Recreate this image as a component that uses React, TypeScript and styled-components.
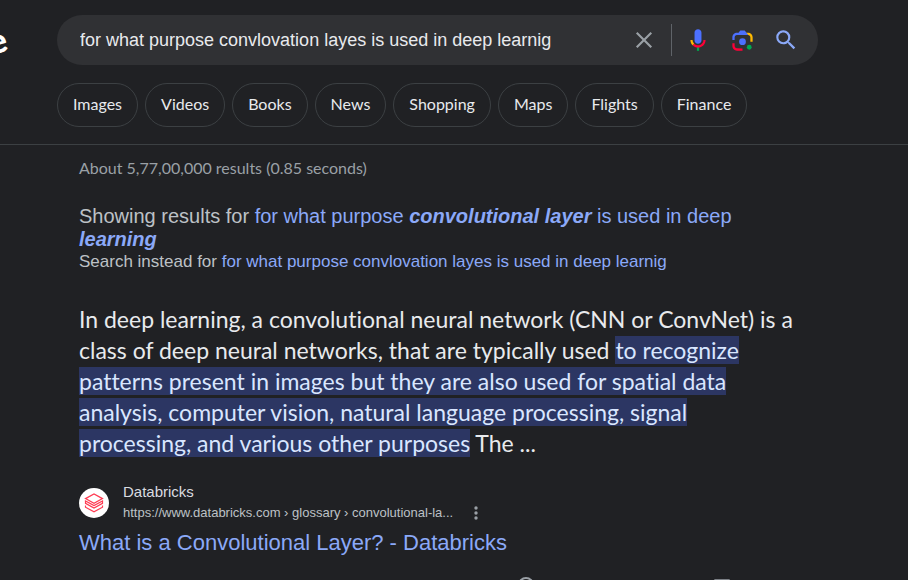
import React, { useState } from "react";
import styled, { createGlobalStyle } from "styled-components";

const sans = `"Liberation Sans", Arial, sans-serif`;
const display = `Lato, "Open Sans", sans-serif`;

const GlobalStyle = createGlobalStyle`
  *, *::before, *::after { box-sizing: border-box; }
  html, body { margin: 0; background: #202124; }
  body { font-family: ${sans}; color: #bdc1c6; overflow: hidden; }
  a { color: inherit; text-decoration: none; }
`;

const Page = styled.div`
  height: 100vh;
  overflow: hidden;
`;

const Header = styled.header`
  display: grid;
  grid-template-columns: 57px minmax(0, 761px);
  row-gap: 18px;
  padding: 15px 24px 17px 0;
  border-bottom: 1px solid #3c4043;
`;

const Logo = styled.a`
  display: flex;
  align-items: center;
  justify-content: flex-end;
  height: 50px;
  padding-right: 51px;
  overflow: hidden;
  color: #fff;
  font: 900 34px/50px ${display};
`;

const TiltedLetter = styled.span`
  display: inline-block;
  transform: rotate(-15deg);
`;

const SearchForm = styled.form`
  display: flex;
  align-items: center;
  height: 50px;
  padding: 0 10px 0 23px;
  border-radius: 25px;
  background: #303134;
`;

const SearchInput = styled.input`
  flex: 1;
  min-width: 0;
  padding: 0;
  border: 0;
  outline: 0;
  background: transparent;
  color: #e8eaed;
  font: 18px/24px ${sans};
`;

const IconButton = styled.button<{ $width?: number }>`
  display: flex;
  align-items: center;
  justify-content: center;
  flex: none;
  width: ${(p) => p.$width ?? 44}px;
  height: 44px;
  padding: 0;
  border: 0;
  background: transparent;
  cursor: pointer;
`;

const Divider = styled.span`
  width: 1px;
  height: 32px;
  margin: 0 4px 0 5px;
  background: #5f6368;
`;

const Filters = styled.nav`
  grid-column: 2;
  display: flex;
  gap: 7px;
`;

const Chip = styled.a`
  display: flex;
  align-items: center;
  height: 44px;
  padding: 0 15px 2px;
  border: 1px solid #3c4043;
  border-radius: 22px;
  color: #e8eaed;
  font: 16px/24px ${display};
`;

const Main = styled.main`
  max-width: 823px;
  padding: 11px 24px 0 79px;
`;

const Stats = styled.p`
  margin: 0;
  color: #9aa0a6;
  font: 16px/24px ${display};
`;

const Spelling = styled.section`
  max-width: 660px;
  margin-top: 25px;
`;

const SpellLine = styled.p<{ $small?: boolean }>`
  margin: 0;
  font-size: ${(p) => (p.$small ? 17 : 20)}px;
  line-height: ${(p) => (p.$small ? 22 : 23)}px;
`;

const TextLink = styled.a`
  color: #8ba9f8;
`;

const Snippet = styled.p`
  margin: 31px 0 0;
  color: #e8eaed;
  font: 23px/31px ${display};
  font-variant-ligatures: none;
`;

const Highlight = styled.mark`
  background: #2c3663;
  color: #d9e6ff;
`;

const Result = styled.article`
  margin-top: 23px;
`;

const Source = styled.div`
  display: flex;
  align-items: center;
  gap: 14px;
`;

const Favicon = styled.span`
  display: flex;
  align-items: center;
  justify-content: center;
  flex: none;
  width: 30px;
  height: 30px;
  border-radius: 50%;
  background: #fff;
`;

const SiteName = styled.div`
  color: #dadce0;
  font-size: 15px;
  line-height: 20px;
`;

const UrlRow = styled.div`
  display: flex;
  align-items: center;
  gap: 13px;
  height: 21px;
`;

const Cite = styled.cite`
  font-style: normal;
  font-size: 13px;
  line-height: 21px;
`;

const Title = styled.h3`
  margin: 6px 0 0;
  font-weight: 400;
  font-size: 22px;
  line-height: 28px;
`;

const ResultFooter = styled.footer`
  display: flex;
  justify-content: flex-end;
  gap: 180px;
  margin-top: 20px;
  padding-right: 69px;
`;

const Svg = ({ size, box = 24, children }: { size: number; box?: number; children: React.ReactNode }) => (
  <svg width={size} height={size} viewBox={`0 0 ${box} ${box}`} aria-hidden="true">
    {children}
  </svg>
);

const ClearIcon = () => (
  <Svg size={26}>
    <path fill="#9aa0a6" d="M19.4 6L18 4.6 12 10.6 6 4.6 4.6 6 10.6 12 4.6 18 6 19.4 12 13.4 18 19.4 19.4 18 13.4 12z" />
  </Svg>
);

const MicIcon = () => (
  <Svg size={26}>
    <path fill="#4c70ff" d="M12 15.5c1.8 0 3.2-1.31 3.2-2.97V5.01C15.2 3.35 13.8 2 12 2S8.8 3.34 8.8 5.01v7.52c0 1.66 1.4 2.97 3.2 2.97z" />
    <path fill="#00a84f" d="M11 18.08h2V22h-2z" />
    <path fill="#ffba00" d="M7.05 16.87C5.78 15.54 5 14.04 5 12h2c0 1.45.56 2.42 1.47 3.38v.32l-1.15 1.18z" />
    <path fill="#ff0038" d="M12 16.93a4.97 5.25 0 0 1-3.54-1.55l-1.41 1.49C8.31 18.21 10.07 19 12 19c3.87 0 6.99-2.92 6.99-7H17c0 2.92-2.24 4.93-5 4.93z" />
  </Svg>
);

const LensIcon = () => (
  <Svg size={27} box={192}>
    <circle fill="#00a84f" cx="144" cy="144" r="17" />
    <circle fill="#4c70ff" cx="96" cy="104" r="24" />
    <path fill="#ff0038" d="M24 135.2C24 153.31 38.69 168 56.8 168H96v-16l-40.1-.1c-8.8 0-15.9-8.19-15.9-17.9v-18H24z" />
    <path fill="#ffba00" d="M168 72.8C168 54.69 153.31 40 135.2 40H116l20 16c8.8 0 16 8.29 16 18v30h16z" />
    <path fill="#4c70ff" d="M112 24H80L68 40H56.8C38.69 40 24 54.69 24 72.8V92h16V74c0-9.71 7.2-18 16-18h80l-12-16z" />
  </Svg>
);

const SearchIcon = () => (
  <Svg size={26}>
    <path fill="#8ba9f8" d="M15.5 14h-.79l-.28-.27A6.471 6.471 0 0 0 16 9.5 6.5 6.5 0 1 0 9.5 16c1.61 0 3.09-.59 4.23-1.57l.27.28v.79l5 4.99L20.49 19l-4.99-5zm-6 0C7.01 14 5 11.99 5 9.5S7.01 5 9.5 5 14 7.01 14 9.5 11.99 14 9.5 14z" />
  </Svg>
);

const BricksIcon = () => (
  <Svg size={20} box={20}>
    <g fill="none" stroke="#ff3b52" strokeWidth="1.2">
      <path d="M1.5 5.6 10 1 18.5 5.6 10 10.2z" />
      <path d="M1.5 8v2.4L10 15l8.5-4.6V8L10 12.6z" />
      <path d="M18.5 12.4v1.8L10 18.8l-8.5-4.6v-1.8" />
    </g>
  </Svg>
);

const MoreIcon = () => (
  <svg width="18" height="18" viewBox="0 0 18 18" aria-hidden="true">
    <g fill="#9aa0a6">
      <circle cx="9" cy="4" r="1.7" />
      <circle cx="9" cy="9" r="1.7" />
      <circle cx="9" cy="14" r="1.7" />
    </g>
  </svg>
);

const filters = ["Images", "Videos", "Books", "News", "Shopping", "Maps", "Flights", "Finance"];

export default function App() {
  const [query, setQuery] = useState("for what purpose convlovation layes is used in deep learnig");

  return (
    <>
      <GlobalStyle />
      <Page>
        <Header>
          <Logo href="#" aria-label="Google">
            Googl<TiltedLetter>e</TiltedLetter>
          </Logo>
          <SearchForm role="search" onSubmit={(e) => e.preventDefault()}>
            <SearchInput aria-label="Search" value={query} onChange={(e) => setQuery(e.target.value)} />
            <IconButton type="button" aria-label="Clear" onClick={() => setQuery("")}>
              <ClearIcon />
            </IconButton>
            <Divider />
            <IconButton type="button" aria-label="Search by voice">
              <MicIcon />
            </IconButton>
            <IconButton type="button" aria-label="Search by image">
              <LensIcon />
            </IconButton>
            <IconButton type="submit" aria-label="Search">
              <SearchIcon />
            </IconButton>
          </SearchForm>
          <Filters aria-label="Search filters">
            {filters.map((name) => (
              <Chip key={name} href="#">{name}</Chip>
            ))}
          </Filters>
        </Header>
        <Main>
          <Stats>About 5,77,00,000 results (0.85 seconds)</Stats>
          <Spelling>
            <SpellLine>
              Showing results for{" "}
              <TextLink href="#">
                for what purpose <b><i>convolutional layer</i></b> is used in deep <b><i>learning</i></b>
              </TextLink>
            </SpellLine>
            <SpellLine $small>
              Search instead for{" "}
              <TextLink href="#">for what purpose convlovation layes is used in deep learnig</TextLink>
            </SpellLine>
          </Spelling>
          <Snippet>
            In deep learning, a convolutional neural network (CNN or ConvNet) is a class of deep neural
            networks, that are typically used{" "}
            <Highlight>
              to recognize patterns present in images but they are also used for spatial data analysis,
              computer vision, natural language processing, signal processing, and various other purposes
            </Highlight>{" "}
            The ...
          </Snippet>
          <Result>
            <Source>
              <Favicon><BricksIcon /></Favicon>
              <div>
                <SiteName>Databricks</SiteName>
                <UrlRow>
                  <Cite>https://www.databricks.com › glossary › convolutional-la...</Cite>
                  <IconButton type="button" $width={20} aria-label="About this result">
                    <MoreIcon />
                  </IconButton>
                </UrlRow>
              </div>
            </Source>
            <Title>
              <TextLink href="#">What is a Convolutional Layer? - Databricks</TextLink>
            </Title>
            <ResultFooter>
              <Svg size={16}>
                <circle cx="12" cy="12" r="10.5" fill="none" stroke="#9aa0a6" strokeWidth="3" />
              </Svg>
              <Svg size={16}>
                <path d="M2 5h20v13H8l-6 5z" fill="none" stroke="#9aa0a6" strokeWidth="3" />
              </Svg>
            </ResultFooter>
          </Result>
        </Main>
      </Page>
    </>
  );
}
